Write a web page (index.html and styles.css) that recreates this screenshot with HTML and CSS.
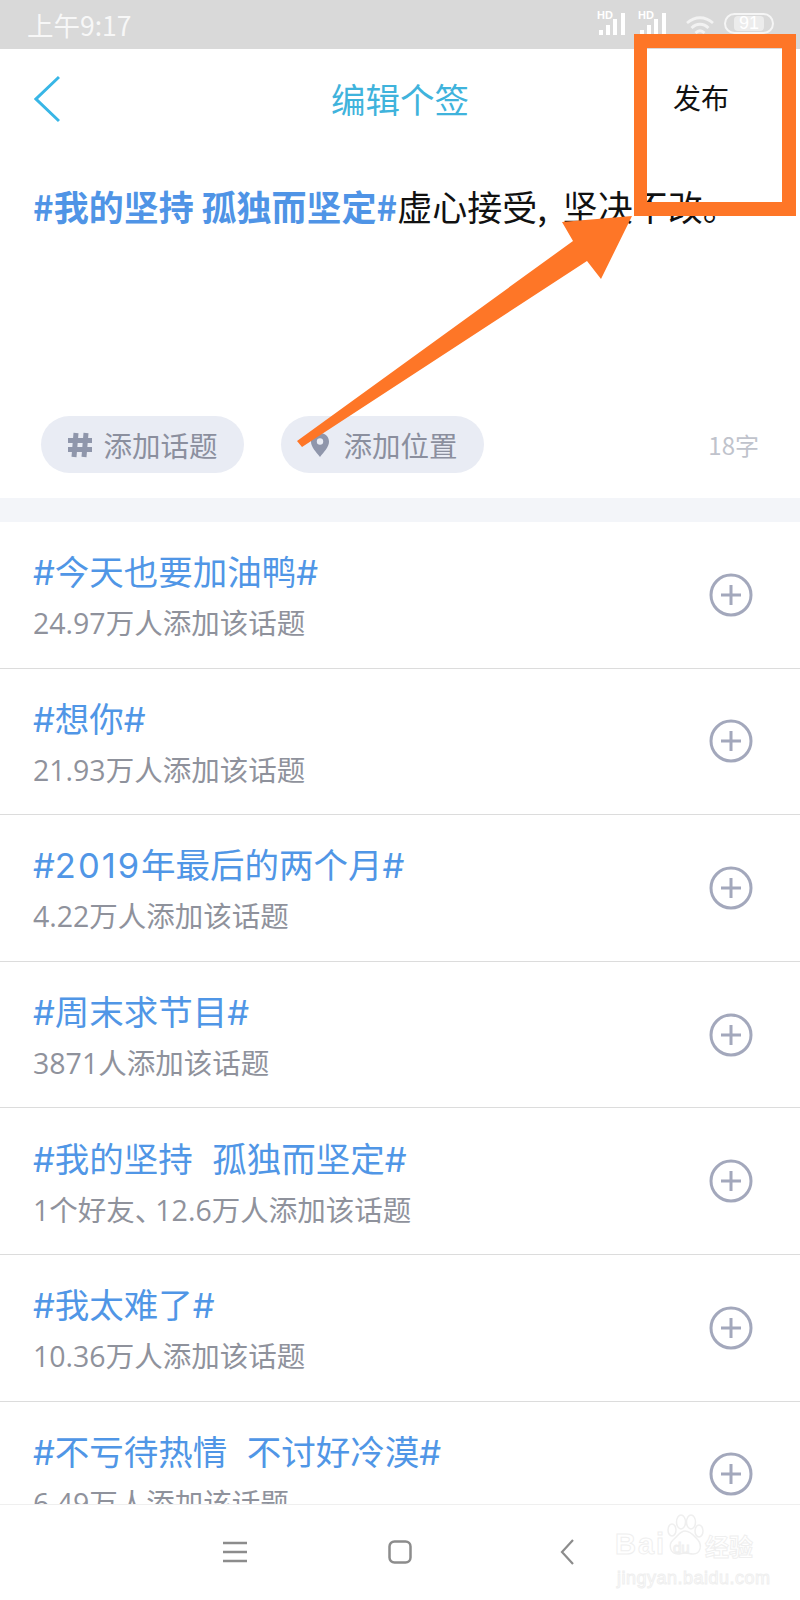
FILE: index.html
```html
<!DOCTYPE html>
<html lang="zh-CN">
<head>
    <meta charset="UTF-8">
    <meta name="viewport" content="width=device-width, initial-scale=1.0">
    <title>编辑个签</title>
    <link rel="stylesheet" href="styles.css">
</head>
<body>
    <div class="phone">
        <!-- 状态栏 -->
        <div class="statusbar">
            <span class="time">上午9:17</span>
            <div class="status-icons">
                <svg class="signal" viewBox="0 0 32 26" width="32" height="26">
                    <text x="0" y="9" class="hd">HD</text>
                    <path d="M2 20h4v5H2zM9 15h4v10H9zM16 9h4v16h-4zM24 3h4v22h-4z" fill="#fff"/>
                </svg>
                <svg class="signal" viewBox="0 0 32 26" width="32" height="26">
                    <text x="0" y="9" class="hd">HD</text>
                    <path d="M2 20h4v5H2zM9 15h4v10H9zM16 9h4v16h-4zM24 3h4v22h-4z" fill="#fff"/>
                </svg>
                <svg class="wifi" viewBox="0 0 28 20" width="28" height="20">
                    <path d="M1 7c8-7 18-7 26 0M5.500 12c5-5 12-5 17 0M9.500 17c3-3 6-3 9 0" fill="none" stroke="#f2f2f2" stroke-width="2.800"/>
                </svg>
                <div class="battery"><span>91</span></div>
            </div>
        </div>

        <!-- 标题栏 -->
        <header class="topbar">
            <svg class="back" viewBox="0 0 26 48" width="26" height="48">
                <path d="M25 2 2 24l23 22" fill="none" stroke="#38b6e6" stroke-width="3"/>
            </svg>
            <h1>编辑个签</h1>
            <span class="publish">发布</span>
        </header>

        <!-- 输入区 -->
        <section class="editor">
            <p class="sign"><b>#我的坚持 孤独而坚定#</b>虚心接受,&nbsp; 坚决不改。</p>
            <div class="chips">
                <div class="chip">
                    <svg viewBox="0 0 26 26" width="26" height="26">
                        <path d="M9 1 7 25M19 1l-2 24M1 8.500h24M1 17.500h24" fill="none" stroke="#8f96ab" stroke-width="5"/>
                    </svg>
                    添加话题
                </div>
                <div class="chip">
                    <svg class="pin" viewBox="0 0 20 26" width="20" height="26">
                        <path d="M10 1C4.800 1 1 4.800 1 9.800 1 15 6 20 10 25c4-5 9-10 9-15.200C19 4.800 15.200 1 10 1z" fill="#8f96ab"/>
                        <circle cx="10" cy="9.500" r="3.200" fill="#e9ecf4"/>
                    </svg>
                    添加位置
                </div>
                <span class="count">18字</span>
            </div>
        </section>

        <!-- 话题列表 -->
        <ul class="topics">
            <li>
                <div class="topic-text"><div class="topic-name">#今天也要加油鸭#</div><div class="topic-meta">24.97万人添加该话题</div></div>
                <svg class="add" viewBox="0 0 44 44" width="44" height="44"><path d="M22 12v20M12 22h20" stroke="#a3a8bc" stroke-width="3" fill="none"/><circle cx="22" cy="22" r="20" stroke="#a3a8bc" stroke-width="3" fill="none"/></svg>
            </li>
            <li>
                <div class="topic-text"><div class="topic-name">#想你#</div><div class="topic-meta">21.93万人添加该话题</div></div>
                <svg class="add" viewBox="0 0 44 44" width="44" height="44"><path d="M22 12v20M12 22h20" stroke="#a3a8bc" stroke-width="3" fill="none"/><circle cx="22" cy="22" r="20" stroke="#a3a8bc" stroke-width="3" fill="none"/></svg>
            </li>
            <li>
                <div class="topic-text"><div class="topic-name">#<span class="num">2019</span>年最后的两个月#</div><div class="topic-meta">4.22万人添加该话题</div></div>
                <svg class="add" viewBox="0 0 44 44" width="44" height="44"><path d="M22 12v20M12 22h20" stroke="#a3a8bc" stroke-width="3" fill="none"/><circle cx="22" cy="22" r="20" stroke="#a3a8bc" stroke-width="3" fill="none"/></svg>
            </li>
            <li>
                <div class="topic-text"><div class="topic-name">#周末求节目#</div><div class="topic-meta">3871人添加该话题</div></div>
                <svg class="add" viewBox="0 0 44 44" width="44" height="44"><path d="M22 12v20M12 22h20" stroke="#a3a8bc" stroke-width="3" fill="none"/><circle cx="22" cy="22" r="20" stroke="#a3a8bc" stroke-width="3" fill="none"/></svg>
            </li>
            <li>
                <div class="topic-text"><div class="topic-name">#我的坚持&nbsp;&nbsp;孤独而坚定#</div><div class="topic-meta">1个好友<span class="tight">、</span>12.6万人添加该话题</div></div>
                <svg class="add" viewBox="0 0 44 44" width="44" height="44"><path d="M22 12v20M12 22h20" stroke="#a3a8bc" stroke-width="3" fill="none"/><circle cx="22" cy="22" r="20" stroke="#a3a8bc" stroke-width="3" fill="none"/></svg>
            </li>
            <li>
                <div class="topic-text"><div class="topic-name">#我太难了#</div><div class="topic-meta">10.36万人添加该话题</div></div>
                <svg class="add" viewBox="0 0 44 44" width="44" height="44"><path d="M22 12v20M12 22h20" stroke="#a3a8bc" stroke-width="3" fill="none"/><circle cx="22" cy="22" r="20" stroke="#a3a8bc" stroke-width="3" fill="none"/></svg>
            </li>
            <li>
                <div class="topic-text"><div class="topic-name">#不亏待热情&nbsp;&nbsp;不讨好冷漠#</div><div class="topic-meta">6.49万人添加该话题</div></div>
                <svg class="add" viewBox="0 0 44 44" width="44" height="44"><path d="M22 12v20M12 22h20" stroke="#a3a8bc" stroke-width="3" fill="none"/><circle cx="22" cy="22" r="20" stroke="#a3a8bc" stroke-width="3" fill="none"/></svg>
            </li>
        </ul>

        <!-- 底部导航 -->
        <nav class="navbar">
            <svg viewBox="0 0 24 22" width="24" height="22"><path d="M0 2h24M0 11h24M0 20h24" stroke="#8c8c8c" stroke-width="2.500"/></svg>
            <svg viewBox="0 0 24 24" width="24" height="24"><rect x="1.500" y="1.500" width="21" height="21" rx="5" fill="none" stroke="#8c8c8c" stroke-width="2.500"/></svg>
            <svg class="nav-back" viewBox="0 0 16 26" width="16" height="26"><path d="M14 1 3 13l11 12" fill="none" stroke="#8c8c8c" stroke-width="2.200"/></svg>
        </nav>

        <!-- 水印 -->
        <div class="watermark">
            <svg class="paw" viewBox="0 0 38 42" width="38" height="42">
                <g fill="#fff" stroke="#efefef" stroke-width="1.500">
                    <ellipse cx="6" cy="16" rx="4" ry="6"/>
                    <ellipse cx="15" cy="8" rx="4.500" ry="7"/>
                    <ellipse cx="25" cy="8" rx="4.500" ry="7"/>
                    <ellipse cx="33" cy="17" rx="4" ry="6"/>
                    <path d="M19 17c-5 0-7 5-12 9-5 5-3 14 5 14 3 0 4-1 7-1s5 1 8 1c8 0 9-9 5-14-4-4-7-9-13-9z"/>
                </g>
            </svg>
            <span class="wm-bai">Bai</span>
            <span class="wm-du">du</span>
            <span class="wm-jy">经验</span>
            <span class="wm-url">jingyan.baidu.com</span>
        </div>

        <!-- 教程标注 -->
        <div class="mark-box"></div>
        <svg class="mark-arrow" viewBox="0 0 800 1600" width="800" height="1600">
            <polygon points="632,216 562,222 573,241 297,441 302,447 587,261 601,279" fill="#fe7627"/>
        </svg>
    </div>
</body>
</html>
```

FILE: styles.css
```css
* {
    box-sizing: border-box;
}
body {
    margin: 0;
    font-family: "Noto Sans CJK SC", "Noto Sans", sans-serif;
    background-color: #fff;
}
.phone {
    position: relative;
    width: 800px;
    height: 1600px;
    overflow: hidden;
    display: flex;
    flex-direction: column;
}
.statusbar {
    height: 49px;
    flex: none;
    background-color: #d9d9d9;
    display: flex;
    align-items: center;
    justify-content: space-between;
    padding: 0 26px 0 27px;
}
.time {
    color: #f7f7f7;
    font-size: 26.500px;
}
.status-icons {
    display: flex;
    align-items: center;
    gap: 9px;
    margin-top: -3px;
}
.hd {
    font-family: "Liberation Sans", sans-serif;
    font-size: 11px;
    font-weight: bold;
    fill: #fff;
}
.wifi {
    margin-left: 7px;
    margin-top: 6px;
}
.battery {
    width: 50px;
    height: 21px;
    border: 2px solid #f5f5f5;
    border-radius: 11px;
    display: flex;
    align-items: center;
    justify-content: center;
    margin-left: 1px;
}
.battery span {
    color: #fff;
    background-color: #ececec;
    font-family: "Liberation Sans", sans-serif;
    font-size: 18px;
    line-height: 15px;
    padding: 0 5px;
    border-radius: 4px;
}
.topbar {
    height: 102px;
    flex: none;
    position: relative;
    display: flex;
    align-items: center;
    justify-content: center;
    padding-bottom: 4px;
}
.topbar h1 {
    margin: 0;
    font-size: 34.500px;
    font-weight: 400;
    color: #3fb3dc;
}
.back {
    position: absolute;
    left: 34px;
    top: 26px;
}
.publish {
    position: absolute;
    left: 673px;
    top: 28px;
    font-size: 28px;
    line-height: 40px;
    color: #111;
}
.editor {
    height: 347px;
    flex: none;
    padding: 29px 34px 25px 33px;
    display: flex;
    flex-direction: column;
    justify-content: space-between;
}
.sign {
    margin: 0;
    font-size: 35px;
    line-height: 52px;
    color: #111;
    white-space: nowrap;
}
.sign b {
    color: #4f94e6;
    font-weight: 700;
}
.chips {
    display: flex;
    align-items: center;
    gap: 37px;
    padding-left: 8px;
}
.chip {
    width: 203px;
    height: 57px;
    border-radius: 29px;
    background-color: #e9ecf4;
    display: flex;
    align-items: center;
    justify-content: center;
    gap: 10px;
    font-size: 28.500px;
    color: #8b8f9e;
}
.pin {
    margin: 0 3px;
}
.count {
    margin-left: auto;
    margin-right: 7px;
    font-size: 24px;
    color: #c0c3cc;
}
.topics {
    list-style: none;
    margin: 0;
    padding: 0;
    flex: none;
    border-top: 24px solid #f3f5f9;
}
.topics li {
    height: 146.600px;
    padding: 0 47px 0 33px;
    display: flex;
    align-items: center;
    justify-content: space-between;
    border-bottom: 1px solid #dcdcdc;
}
.topic-name {
    font-family: Inter, "Noto Sans CJK SC", sans-serif;
    font-size: 34.500px;
    line-height: 46px;
    margin-top: 3px;
    color: #5096e6;
}
.num {
    letter-spacing: 2px;
}
.topic-meta {
    font-family: "Open Sans", "Noto Sans CJK SC", sans-serif;
    font-size: 28.500px;
    line-height: 38px;
    margin-top: 8px;
    color: #8f929c;
}
.tight {
    letter-spacing: -8px;
}
.add {
    flex: none;
}
.navbar {
    position: absolute;
    left: 0;
    right: 0;
    bottom: 0;
    height: 96px;
    background-color: #fff;
    border-top: 1px solid #efefef;
    display: flex;
    align-items: center;
    padding: 0 0 2px 223px;
    gap: 141px;
}
.nav-back {
    margin-left: 6px;
}
.watermark {
    position: absolute;
    left: 613px;
    top: 1513px;
    width: 146px;
    height: 76px;
    color: #fff;
    -webkit-text-stroke: 1px #efefef;
}
.watermark span {
    position: absolute;
    white-space: nowrap;
}
.paw {
    position: absolute;
    left: 53px;
    top: 1px;
}
.wm-bai {
    left: 2px;
    top: 14px;
    font-family: "Liberation Sans", sans-serif;
    font-size: 29px;
    line-height: 34px;
    font-weight: 700;
    letter-spacing: 2px;
}
.wm-du {
    left: 60px;
    top: 26px;
    font-family: "Liberation Sans", sans-serif;
    font-size: 15px;
    line-height: 18px;
}
.wm-jy {
    left: 92px;
    top: 19px;
    font-size: 24px;
    line-height: 28px;
    font-weight: 700;
}
.wm-url {
    left: 4px;
    top: 54px;
    font-family: "Liberation Sans", sans-serif;
    font-size: 18px;
    line-height: 22px;
    letter-spacing: 0.500px;
}
.mark-box {
    position: absolute;
    left: 634px;
    top: 34px;
    width: 162px;
    height: 182px;
    border: solid #fe7627;
    border-width: 14px 14px 14px 13px;
}
.mark-arrow {
    position: absolute;
    left: 0;
    top: 0;
}
```
